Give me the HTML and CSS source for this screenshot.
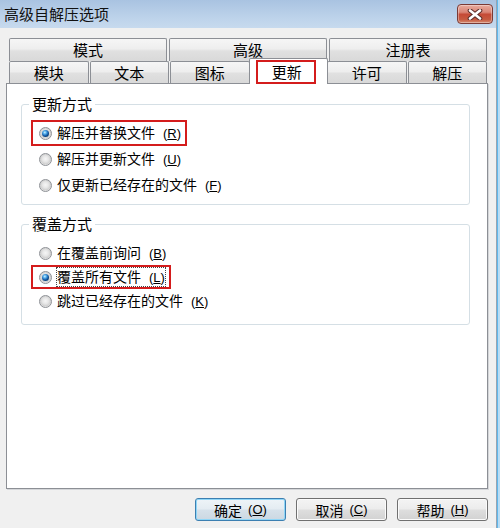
FILE: index.html
```html
<!DOCTYPE html>
<html lang="zh-CN">
<head>
<meta charset="utf-8">
<title>高级自解压选项</title>
<link rel="stylesheet" href="styles.css">
</head>
<body>
<div class="window">
  <div class="main">
    <div class="titlebar">
      <span class="title">高级自解压选项</span>
      <div class="close">
        <svg width="16" height="11" viewBox="0 0 16 11">
          <path d="M3 1.5 L13 9.5 M13 1.5 L3 9.5" stroke="#5b2d29" stroke-width="4.6" stroke-linecap="round" fill="none"/>
          <path d="M3 1.5 L13 9.5 M13 1.5 L3 9.5" stroke="#ffffff" stroke-width="2.6" stroke-linecap="round" fill="none"/>
        </svg>
      </div>
    </div>
    <div class="content">
      <div class="tabs">
        <div class="tabrow row1">
          <div class="tab">模式</div>
          <div class="tab">高级</div>
          <div class="tab">注册表</div>
        </div>
        <div class="tabrow row2">
          <div class="tab">模块</div>
          <div class="tab">文本</div>
          <div class="tab">图标</div>
          <div class="tab selected"><span class="tab-mark">更新</span></div>
          <div class="tab">许可</div>
          <div class="tab">解压</div>
        </div>
      </div>
      <div class="panel">
        <fieldset class="group g1">
          <legend>更新方式</legend>
          <div class="opt marked"><span class="radio on"></span><span class="label">解压并替换文件<span class="key">(<u>R</u>)</span></span></div>
          <div class="opt"><span class="radio"></span><span class="label">解压并更新文件<span class="key">(<u>U</u>)</span></span></div>
          <div class="opt"><span class="radio"></span><span class="label">仅更新已经存在的文件<span class="key">(<u>F</u>)</span></span></div>
        </fieldset>
        <fieldset class="group g2">
          <legend>覆盖方式</legend>
          <div class="opt"><span class="radio"></span><span class="label">在覆盖前询问<span class="key">(<u>B</u>)</span></span></div>
          <div class="opt marked"><span class="radio on"></span><span class="label focus">覆盖所有文件<span class="key">(<u>L</u>)</span></span></div>
          <div class="opt"><span class="radio"></span><span class="label">跳过已经存在的文件<span class="key">(<u>K</u>)</span></span></div>
        </fieldset>
      </div>
      <div class="buttons">
        <div class="btn default">确定<span class="key">(<u>O</u>)</span></div>
        <div class="btn">取消<span class="key">(<u>C</u>)</span></div>
        <div class="btn">帮助<span class="key">(<u>H</u>)</span></div>
      </div>
    </div>
  </div>
  <div class="frame-right"></div>
</div>
</body>
</html>
```
FILE: styles.css
```css
html, body {
  margin: 0;
  padding: 0;
}
body {
  width: 500px;
  height: 528px;
  overflow: hidden;
  background: #f0f0f0;
  font-family: "Noto Sans CJK SC", "Noto Sans", sans-serif;
  color: #000;
}
.window {
  display: flex;
  width: 500px;
  height: 528px;
}
.main {
  width: 496px;
  display: flex;
  flex-direction: column;
}
.titlebar {
  height: 28px;
  display: flex;
  align-items: center;
  padding-left: 4px;
  background: linear-gradient(#a9c3e1, #bcd2ea 60%, #c7daee);
}
.title {
  font-size: 15px;
  line-height: 18px;
  color: #111;
}
.close {
  margin-left: auto;
  margin-right: 3px;
  width: 36px;
  height: 20px;
  box-sizing: border-box;
  border: 1px solid #7a3a35;
  border-radius: 4px;
  background: linear-gradient(#e8ab9e, #d98576 40%, #c54a36 52%, #c65a40 80%, #d58a70);
  display: flex;
  align-items: center;
  justify-content: center;
  box-shadow: inset 0 0 0 1px rgba(255,255,255,0.35);
}
.content {
  padding-top: 10px;
  display: flex;
  flex-direction: column;
}
.tabs {
  margin-left: 9px;
  width: 478px;
}
.tabrow {
  display: flex;
}
.row1 {
  gap: 2px;
  height: 23px;
}
.row2 {
  gap: 1px;
  height: 22px;
}
.tab {
  flex: 1 1 0;
  box-sizing: border-box;
  border: 1px solid #8c8f95;
  border-bottom: none;
  border-radius: 2px 2px 0 0;
  background: linear-gradient(#f6f6f6, #eeeeee 45%, #e0e0e0 55%, #d9d9d9);
  font-size: 15px;
  display: flex;
  align-items: center;
  justify-content: center;
  line-height: 18px;
}
.tab.selected {
  position: relative;
  z-index: 2;
  margin: -3px -2px -1px;
  background: #fff;
  align-items: stretch;
  justify-content: flex-start;
}
.tab-mark {
  flex: 1;
  margin: 1px 11px 0 6px;
  border: 2px solid #d41c1c;
  display: flex;
  align-items: center;
  justify-content: center;
  padding-left: 2px;
}
.panel {
  margin-left: 6px;
  width: 482px;
  height: 406px;
  box-sizing: border-box;
  border: 1px solid #8c8f95;
  background: #fff;
  box-shadow: 1px 1px 0 #d4d6d9;
  display: flex;
  flex-direction: column;
}
.group {
  border: 1px solid #d5dfe5;
  border-radius: 3px;
  margin: 12px 17px 0 14px;
  min-width: 0;
}
.g1 {
  padding: 8px 0 6px 0;
}
.g2 {
  margin-top: 11px;
  padding: 9px 0 11px 0;
}
legend {
  margin-left: 7px;
  padding: 0 3px;
  font-size: 15px;
  line-height: 16px;
}
.opt {
  display: flex;
  align-items: center;
  gap: 5px;
  width: fit-content;
  height: 26px;
  box-sizing: border-box;
  border: 2px solid transparent;
  margin-left: 9px;
  padding: 0 4px 0 6px;
  font-size: 14px;
}
.g2 .opt {
  height: 24px;
}
.opt.marked {
  border-color: #d41c1c;
}
.label {
  line-height: 16px;
}
.focus {
  outline: 1px dotted #444;
  outline-offset: 0px;
}
.key {
  font-family: "Liberation Sans", sans-serif;
  font-size: 13px;
  margin-left: 8px;
}
.radio {
  width: 13px;
  height: 13px;
  box-sizing: border-box;
  border-radius: 50%;
  border: 1px solid #8e9196;
  background: radial-gradient(circle at 50% 45%, #f6f6f6 0, #e6e6e6 3px, #d0d0d0 5px, #e9e9e9 6px);
  display: flex;
  align-items: center;
  justify-content: center;
  flex: none;
}
.radio.on::after {
  content: "";
  width: 7px;
  height: 7px;
  border-radius: 50%;
  background: radial-gradient(circle at 40% 35%, #d2f1ff 0, #58b2ec 1.5px, #1f6bb8 3px, #0c4682 4px);
}
.buttons {
  display: flex;
  justify-content: flex-end;
  gap: 10px;
  margin-top: 9px;
  padding-right: 8px;
}
.btn {
  width: 91px;
  height: 23px;
  box-sizing: border-box;
  border: 1px solid #707070;
  border-radius: 3px;
  background: linear-gradient(#f4f4f4, #ececec 48%, #dedede 52%, #d2d2d2);
  box-shadow: inset 0 0 0 1px #fbfbfb;
  display: flex;
  align-items: center;
  justify-content: center;
  font-size: 14px;
  line-height: 16px;
}
.btn .key {
  margin-left: 6px;
}
.btn.default {
  border-color: #3c7fb1;
  box-shadow: inset 0 0 0 1px #8fd6f7;
  background: linear-gradient(#eef4f8, #e4ecf2 48%, #d6e1ea 52%, #ccd8e2);
}
.frame-right {
  width: 4px;
  background: linear-gradient(to right, #98a4b2 0 1px, #5fb8ec 1px 2px, #b8dcf4 2px);
}
```
